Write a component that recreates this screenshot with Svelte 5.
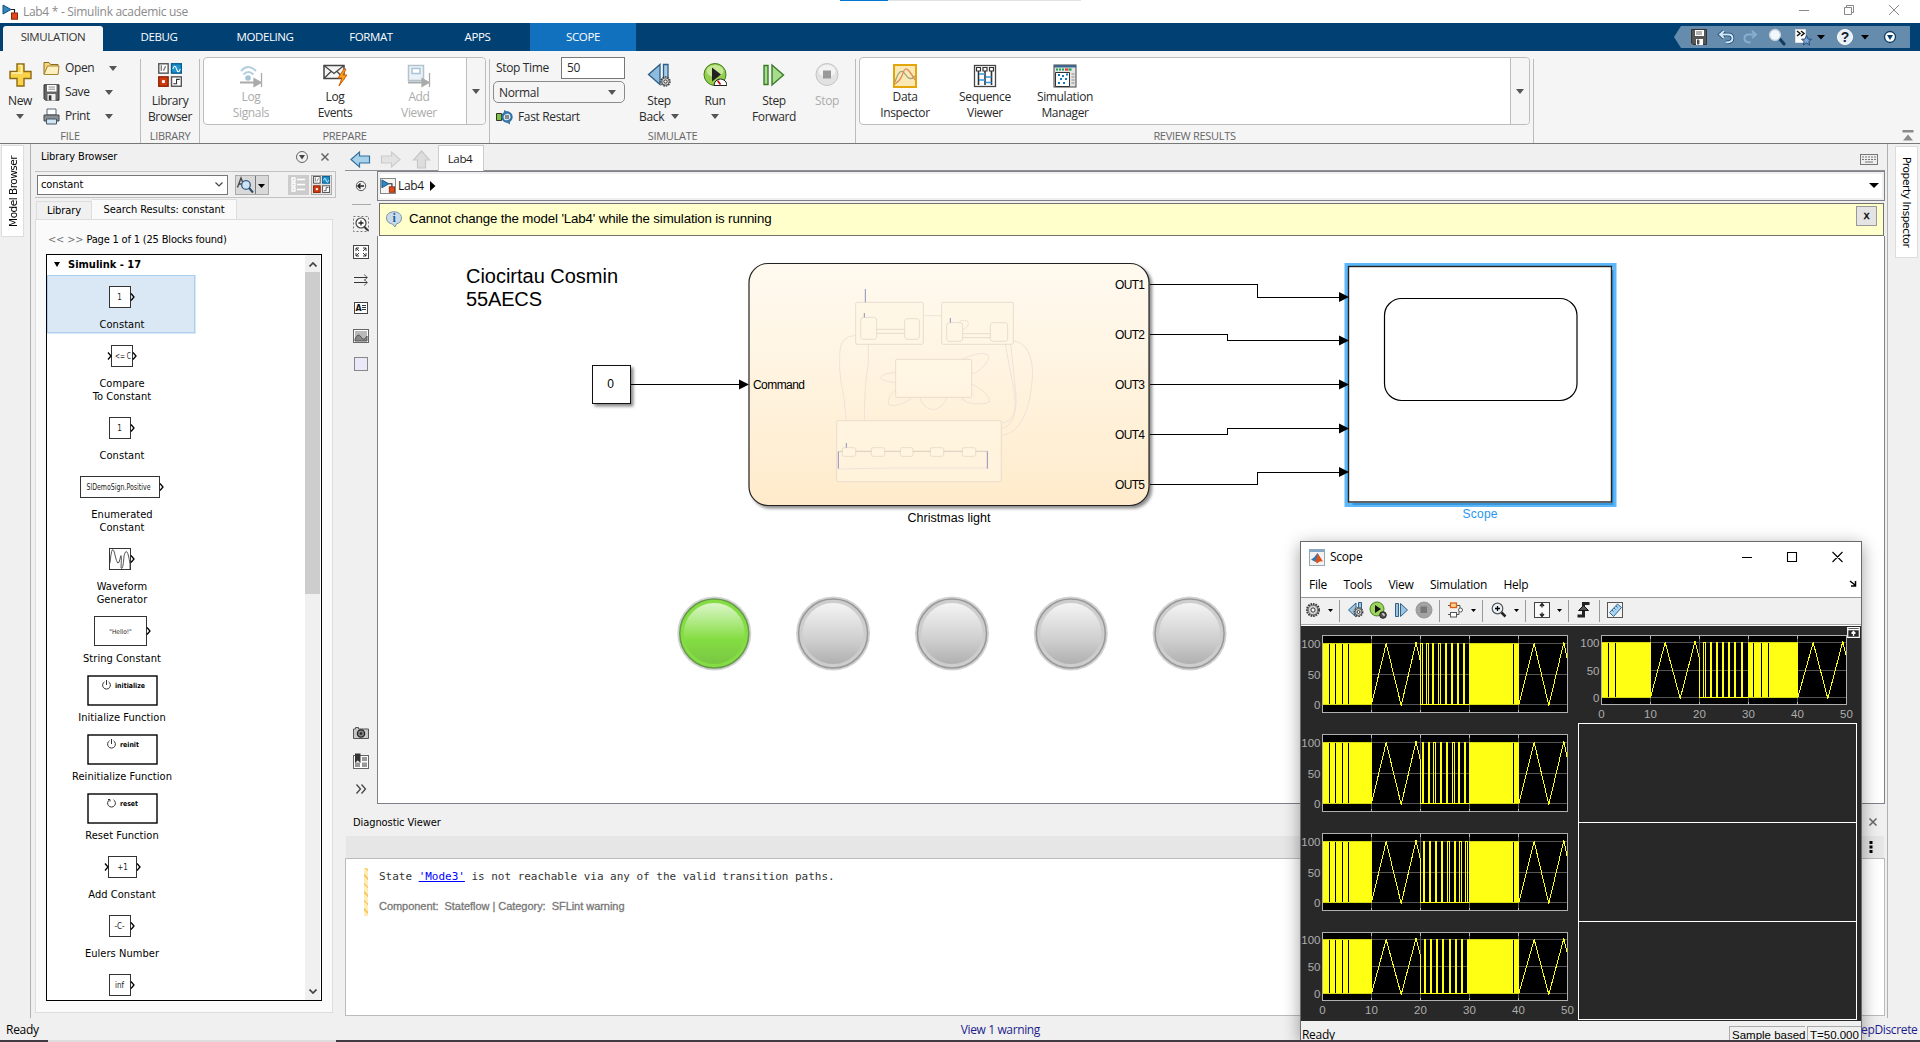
<script>
  const blocks = [
    { kind: 'box', text: '1', label: ['Constant'], selected: true },
    { kind: 'compare', text: '<= C', label: ['Compare', 'To Constant'] },
    { kind: 'box', text: '1', label: ['Constant'] },
    { kind: 'wide', text: 'SlDemoSign.Positive', label: ['Enumerated', 'Constant'] },
    { kind: 'wave', text: '', label: ['Waveform', 'Generator'] },
    { kind: 'string', text: '"Hello!"', label: ['String Constant'] },
    { kind: 'func', text: 'initialize', ix: 59, w: 30, label: ['Initialize Function'] },
    { kind: 'func', text: 'reinit', ix: 64, w: 19, label: ['Reinitialize Function'] },
    { kind: 'func', text: 'reset', ix: 64, w: 18, label: ['Reset Function'] },
    { kind: 'add', text: '+1', label: ['Add Constant'] },
    { kind: 'box', text: '-C-', label: ['Eulers Number'] },
    { kind: 'box', text: 'inf', label: [] }
  ];

  const outs = [
    { name: 'OUT1', y: 284.5, to: 297, bend: 1257.5 },
    { name: 'OUT2', y: 334.5, to: 340.5, bend: 1227.5 },
    { name: 'OUT3', y: 384.5, to: 384.5, bend: 1240.5 },
    { name: 'OUT4', y: 434.5, to: 428.5, bend: 1227.5 },
    { name: 'OUT5', y: 484.5, to: 472, bend: 1257.5 }
  ];

  const lamps = [714.3, 833.1, 952, 1070.8, 1189.6];

  // Signal shapes are given in pixels from the left edge of the axes.
  const early = [7, 13, 20, 26];
  const tall = { top: 9.5, bottom: 86.5, hi: 17.5, mid: 48.5, lo: 78.5 };
  const short = { top: 9.5, bottom: 77.5, hi: 16.5, mid: 43.5, lo: 70.5 };
  const plots = [
    { ...tall, x: 21.5, gaps: early, fill: 146.5, late: [191], solid: [110.5, 123.5, 129.5, 135.5, 141.5], open: [[98, 100], [104, 106], [116, 118]] },
    { ...tall, x: 21.5, gaps: early, fill: 146.5, late: [191], solid: [100.5, 106.5, 118.5, 124.5, 136.5, 142.5], open: [[111, 113], [130, 132]] },
    { ...tall, x: 21.5, gaps: early, fill: 146.5, late: [191], solid: [101.5, 107.5, 113.5, 119.5, 132.5], open: [[125, 127], [137, 139], [143, 145]] },
    { ...short, x: 21.5, gaps: early, fill: 144.5, late: [191], solid: [102.5, 108.5, 114.5, 120.5, 127.5, 133.5, 139.5], open: [], axis: 87 }
  ];
  const plot5 = { ...short, x: 23.5, lo: 71.5, mid: 44.5, bottom: 78.5, gaps: [7, 14], fill: 146.5, late: [152, 160, 167], solid: [109.5, 115.5, 121.5, 127.5, 133.5, 140.5], open: [[102, 104]], axis: 88 };
  const ticks = [0, 10, 20, 30, 40, 50];

  const trace = (p) => {
    const pts = [[49, p.lo], [63.7, p.hi], [78.7, p.lo + 1], [93.5, p.hi - 1], [98, p.hi + (p.lo - p.hi) * 0.3], [98, p.lo], [p.fill, p.lo]];
    return pts.map((q) => `${p.x + q[0]},${q[1]}`).join(' ');
  };
  const tail = (p) =>
    [[196.3, p.lo], [211.7, p.hi], [226.3, p.lo + 1], [241.3, p.hi - 1], [245, p.hi + (p.lo - p.hi) * 0.27], [245, p.lo]]
      .map((q) => `${p.x + q[0]},${q[1]}`).join(' ');
</script>

{#snippet caret()}
  <svg class="caret" width="8" height="5" viewBox="0 0 8 5"><path d="M0 0h8L4 5z" fill="#555" /></svg>
{/snippet}

{#snippet modelIcon()}
  <svg width="16" height="16" viewBox="0 0 16 16">
    <path d="M1 1l8 4.5-8 4.5z" fill="#2f87c0" stroke="#12507c" />
    <path d="M9 5.5h3.5V9" fill="none" stroke="#222" stroke-width="1.2" />
    <rect x="9.5" y="9" width="6" height="6.2" fill="#e0481a" stroke="#8c2508" />
  </svg>
{/snippet}

{#snippet grid4(s)}
  <svg width={s} height={s} viewBox="0 0 22 22">
    <rect x=".7" y=".7" width="8.6" height="8.6" fill="#fff" stroke="#555" stroke-width="1.3" />
    <path d="M3 2v5M5 7l2-4" stroke="#777" stroke-width="1.2" />
    <rect x="12.4" y=".7" width="9" height="8.6" fill="#1d94cf" stroke="#0a5f92" stroke-width="1.3" />
    <path d="M13.5 5.5q2-5 3.500 0t3.500 0" fill="none" stroke="#fff" />
    <rect x=".7" y="12.700" width="8.600" height="8.600" fill="#cf3a10" stroke="#8f2504" stroke-width="1.300" />
    <rect x="3.700" y="15.700" width="2.600" height="2.600" fill="#fff" />
    <rect x="12.400" y="12.700" width="9" height="8.600" fill="#fff" stroke="#555" stroke-width="1.300" />
    <path d="M14 19h3v-4h3" fill="none" stroke="#333" />
  </svg>
{/snippet}

{#snippet disk(c)}
  <svg width="17" height="17" viewBox="0 0 17 17">
    <path d="M1 .8h15v15.400H2.500L1 14.700z" fill={c} stroke="#333" />
    <rect x="4" y="1" width="9.500" height="6.500" fill="#fff" />
    <path d="M5.500 3h6.500M5.500 5.200h6.500" stroke="#888" />
    <rect x="4.500" y="10" width="8" height="6.500" fill="#eee" /><rect x="5.800" y="11.300" width="2.600" height="5" fill="#333" />
  </svg>
{/snippet}

{#snippet gear(x, y, r)}
  <circle cx={x} cy={y} {r} fill="#ddd" stroke="#3d3d3d" stroke-width={r * 0.35} stroke-dasharray="1.6 .9" />
  <circle cx={x} cy={y} r={r * 0.82} fill="#d4d4d4" stroke="#444" stroke-width=".8" />
  <circle cx={x} cy={y} r={r * 0.35} fill="#fff" stroke="#333" />
{/snippet}

{#snippet plot(p, w)}
  <svg width={w} height="99" viewBox="0 0 {w} 99" shape-rendering="crispEdges">
    <rect x={p.x} y={p.top} width="245" height={p.bottom - p.top} fill="#000" />
    {#each [p.hi, p.mid, p.lo] as y}<path d="M{p.x} {y}h245" stroke="#555" />{/each}
    {#each [49, 98, 147, 196] as x}
      <path d="M{p.x + x} {p.top}v{p.bottom - p.top}" stroke="#555" />
      <path d="M{p.x + x} {p.top}v3M{p.x + x} {p.bottom}v-3" stroke="#b5b5b5" />
    {/each}
    <g fill="#ffff14">
      <rect x={p.x} y={p.hi - 0.5} width="49" height={p.lo - p.hi + 1} />
      <rect x={p.x + p.fill} y={p.hi - 0.5} width={196 - p.fill} height={p.lo - p.hi + 1} />
      {#each p.solid as s}<rect x={p.x + s - 1} y={p.hi - 0.5} width="2" height={p.lo - p.hi + 1} />{/each}
    </g>
    {#each [...p.gaps, ...p.late] as g}<rect x={p.x + g - 0.5} y={p.hi + 0.5} width="1" height={p.lo - p.hi - 1} fill="#000" />{/each}
    {#each p.open as o}<path d="M{p.x + o[0]} {p.lo}V{p.hi}H{p.x + o[1]}V{p.lo}" fill="none" stroke="#ffff14" />{/each}
    <path d="M{p.x} {p.hi}h49M{p.x} {p.lo}h49M{p.x + p.fill} {p.hi}H{p.x + 196}M{p.x + p.fill} {p.lo}H{p.x + 196}" stroke="#d9d916" />
    <polyline points={trace(p)} fill="none" stroke="#ffff14" />
    <polyline points={tail(p)} fill="none" stroke="#ffff14" />
    <rect x={p.x} y={p.top} width="245" height={p.bottom - p.top} fill="none" stroke="#b0b0b0" />
    <g class="tick" text-anchor="end">
      <text x={p.x - 2} y={p.hi + 4}>100</text><text x={p.x - 2} y={p.mid + 4}>50</text><text x={p.x - 2} y={p.lo + 4}>0</text>
    </g>
    {#if p.axis}
      <g class="tick" text-anchor="middle">
        {#each ticks as t}<text x={p.x + t * 4.9} y={p.axis + 4}>{t}</text>{/each}
      </g>
    {/if}
  </svg>
{/snippet}

<div class="app">
  <header class="title">
    {@render modelIcon()}
    <span>Lab4 * - Simulink academic use</span>
    <i class="accent"></i>
    <svg class="wc" width="110" height="23" viewBox="0 0 110 23" fill="none" stroke="#888">
      <path d="M5 10.5h10M50.500 7.500h7v7h-7zM52.500 7.500v-2h7v7h-2M95 5l10 10M105 5l-10 10" />
    </svg>
  </header>

  <nav class="tabs">
    <div class="tab active">SIMULATION</div>
    <div class="tab t1">DEBUG</div>
    <div class="tab t2">MODELING</div>
    <div class="tab t3">FORMAT</div>
    <div class="tab t4">APPS</div>
    <div class="tab scope-tab">SCOPE</div>
    <div class="quick">
      <svg width="236" height="22" viewBox="1674 26 236 22">
        <path d="M1674 37l7-11h229v22h-229z" fill="#668cad" />
        <path d="M1691.500 29.500h15v15h-13.500l-1.500-1.500z" fill="#555" stroke="#333" />
        <path d="M1695 30h9v6h-9zM1696 39h7v6h-7z" fill="#fff" /><path d="M1697 40h2v4h-2M1696 32h6M1696 34h6" stroke="#666" fill="#444" />
        <path d="M1724 31l-4 3.500 4 3.500M1720.500 34.500h8q4 0 4 4t-7 4" fill="none" stroke="#16456f" stroke-width="3.600" />
        <path d="M1724 31l-4 3.500 4 3.500M1720.500 34.500h8q4 0 4 4t-7 4" fill="none" stroke="#cfe6f6" stroke-width="2" />
        <path d="M1752 31l4 3.500-4 3.500M1755.500 34.500h-7q-4 0-4 4t6 4" fill="none" stroke="#86afcd" stroke-width="2" />
        <path d="M1779 38l5 6" stroke="#153a5e" stroke-width="3" stroke-linecap="round" /><circle cx="1775" cy="35" r="5.500" fill="#f2f7fb" stroke="#c3cfda" stroke-width="1.300" />
        <path d="M1795.500 29.500h10v13h-10z" fill="#fff" stroke="#ddd" /><path d="M1797 31l3 2.500-3 2.500M1801 31l3 2.500-3 2.500" fill="none" stroke="#111" stroke-width="1.500" />
        <path d="M1806.500 35.500l1.500 3.500 3.500.3-2.700 2.200.9 3.500-3.200-2-3.200 2 .9-3.500-2.700-2.200 3.500-.3z" fill="#7da7d0" stroke="#214c7c" />
        <path d="M1817 35h8l-4 4.500zM1861 35h8l-4 4.500z" fill="#000" />
        <circle cx="1845" cy="37" r="7.500" fill="#e8f0f6" stroke="#fff" />
        <text x="1845" y="42" class="qm" text-anchor="middle">?</text>
        <circle cx="1890" cy="37" r="5.500" fill="#fff" stroke="#0a3d69" stroke-width="1.300" /><path d="M1887 35h6l-3 5z" fill="#073a66" />
      </svg>
    </div>
  </nav>

  <section class="ribbon">
    <div class="sec s-file">
      <div class="body">
        <div class="big new">
          <svg width="24" height="24" viewBox="0 0 24 24"><path d="M9 1h7v7.500h7v7h-7V23H9v-7.500H2v-7h7z" fill="#fbd34b" stroke="#8d6a12" stroke-width="1.400" /><path d="M10.500 2.500h3v7.500H3.500" fill="none" stroke="#fff2b8" stroke-width="1.500" /></svg>
          <div class="cap">New<br />{@render caret()}</div>
        </div>
        <div class="rows">
          <div class="row">
            <svg width="17" height="17" viewBox="0 0 17 17"><path d="M1 14V2.500h5l1.500 2H15V14z" fill="#f6d67c" stroke="#8a6b22" /><path d="M1 14.500L4.500 6H16l-1 8.500z" fill="#fdf0c0" stroke="#a8852f" /></svg>
            <span>Open</span>{@render caret()}</div>
          <div class="row">{@render disk('#666')}<span>Save</span>{@render caret()}</div>
          <div class="row">
            <svg width="17" height="17" viewBox="0 0 17 17"><path d="M4 1h9v6H4z" fill="#fff" stroke="#567" /><path d="M1 7h15v6H1z" fill="#8a8f95" stroke="#444" /><path d="M3.500 11h10v5h-10z" fill="#cfe6f5" stroke="#456" /></svg>
            <span>Print</span>{@render caret()}</div>
        </div>
      </div>
      <div class="name">FILE</div>
    </div>

    <div class="sec s-lib">
      <div class="body"><div class="big lib">{@render grid4(24)}<div class="cap">Library<br />Browser</div></div></div>
      <div class="name">LIBRARY</div>
    </div>

    <div class="sec s-prep">
      <div class="gallery">
        <div class="g-item off">
          <svg width="24" height="24" viewBox="0 0 24 24" fill="none"><path d="M2 7q7-8 15 0M4.500 10.500q5-5 10 0" stroke="#b4cede" stroke-width="2" /><circle cx="9" cy="14" r="2.800" fill="#a7c4d6" /><path d="M1 18.500h16" stroke="#aaa" stroke-width="2" /><path d="M15 14.500l7 4-7 4zM22.500 9v14" fill="#aaa" stroke="#aaa" stroke-width="1.300" /></svg>
          <div>Log<br />Signals</div></div>
        <div class="g-item">
          <svg width="24" height="24" viewBox="0 0 24 24"><path d="M1 1.500h20v13H1z" fill="#f5f5f5" stroke="#444" stroke-width="1.500" /><path d="M1 1.500l10 8 10-8M1 14.500L8 7.500M21 14.500L14 7.500" fill="none" stroke="#444" stroke-width="1.300" /><path d="M21 5l-6 9h4l-3 8 8-11h-4l3-6z" fill="#fba31c" stroke="#cf5b06" /></svg>
          <div>Log<br />Events</div></div>
        <div class="g-item off">
          <svg width="24" height="24" viewBox="0 0 24 24"><path d="M1.500 1.500h15v15h-15z" fill="#eaf2f8" stroke="#b4c2cc" stroke-width="1.500" /><path d="M5 4.500h8v5H5z" fill="#fff" stroke="#a8c4d8" stroke-width="1.500" /><path d="M1 18.500h16" stroke="#aaa" stroke-width="2" /><path d="M15 14.500l7 4-7 4zM22.500 9v14" fill="#aaa" stroke="#aaa" stroke-width="1.300" /></svg>
          <div>Add<br />Viewer</div></div>
        <div class="drop">{@render caret()}</div>
      </div>
      <div class="name">PREPARE</div>
    </div>

    <div class="sec s-sim">
      <div class="body">
        <div class="form">
          <div class="stop"><span>Stop Time</span><div class="input">50</div></div>
          <div class="combo"><span>Normal</span>{@render caret()}</div>
          <div class="fast">
            <svg width="17" height="15" viewBox="0 0 17 15"><path d="M.5 3.500h5v7h-5z" fill="#7cc43e" stroke="#333" /><circle cx="11" cy="7" r="4.600" fill="#d5e5f1" stroke="#2f6ea3" stroke-width="2.200" /><path d="M8 0l5 2.500-5 2.500zM14 9l-5 2.500 5 3z" fill="#3a78ab" /><path d="M9 6h4M9 8h4" stroke="#333" /></svg>
            <span>Fast Restart</span></div>
        </div>
        <div class="big b1">
          <svg width="24" height="24" viewBox="0 0 24 24"><path d="M13 1.500v20L1.500 11.500z" fill="#8fbbdc" stroke="#2a5d87" stroke-width="1.300" /><path d="M16.500 1.500h4.500v14h-4.500z" fill="#a9cde6" stroke="#2a5d87" stroke-width="1.300" />{@render gear(18.5, 18.5, 4.5)}</svg>
          <div class="cap">Step<br />Back <span class="in">{@render caret()}</span></div></div>
        <div class="big b2">
          <svg width="24" height="24" viewBox="0 0 24 24"><circle cx="12" cy="11.500" r="11" fill="#95cf4e" stroke="#3f7a1e" /><ellipse cx="12" cy="8" rx="8.500" ry="6" fill="#c6e896" /><path d="M9 4.500l9 7-9 7z" fill="#222" /><path d="M11 22.500a6.500 6.500 0 1 1 13 0z" fill="#fff" stroke="#222" /><path d="M17.500 21.500l-3-4" stroke="#c00" stroke-width="1.500" /></svg>
          <div class="cap">Run<br />{@render caret()}</div></div>
        <div class="big b3">
          <svg width="24" height="24" viewBox="0 0 24 24"><path d="M2 2.500h4v19H2z" fill="#a6dc8c" stroke="#3a7d27" stroke-width="1.400" /><path d="M10 2l11.500 10L10 22z" fill="#a6dc8c" stroke="#3a7d27" stroke-width="1.400" /></svg>
          <div class="cap">Step<br />Forward</div></div>
        <div class="big b4 off">
          <svg width="24" height="24" viewBox="0 0 24 24"><circle cx="12" cy="11.500" r="11" fill="#e2e2e2" stroke="#c4c4c4" /><ellipse cx="12" cy="8" rx="8.500" ry="6" fill="#f3f3f3" /><rect x="8" y="7.500" width="8" height="8" fill="#999" /></svg>
          <div class="cap">Stop</div></div>
      </div>
      <div class="name">SIMULATE</div>
    </div>

    <div class="sec s-rev">
      <div class="gallery">
        <div class="g-item">
          <svg width="24" height="24" viewBox="0 0 24 24"><rect x="1" y="1" width="22" height="22" fill="#fbe9b5" stroke="#e2a60c" stroke-width="2" /><path d="M2 18q5-16 10-8t10 2" fill="none" stroke="#9aa77b" stroke-width="1.300" /><path d="M2 20q6-4 8-11t6-2 6 9" fill="none" stroke="#e08a5a" stroke-width="1.300" /></svg>
          <div>Data<br />Inspector</div></div>
        <div class="g-item">
          <svg width="24" height="24" viewBox="0 0 24 24" fill="none"><rect x="1.500" y="1.500" width="21" height="21" fill="#fff" stroke="#444" stroke-width="1.300" /><path d="M5.500 7v14M12 7v14M18.500 7v14" stroke="#333" stroke-width="1.600" /><path d="M3.500 3.500h4v3.500h-4zM10 3.500h4v3.500h-4zM16.500 3.500h4v3.500h-4z" fill="#fff" stroke="#333" stroke-width="1.200" /><path d="M6 10h6M6 16h6M12.500 13h6M12.500 18.500h6" stroke="#2d9be8" stroke-width="1.500" /></svg>
          <div>Sequence<br />Viewer</div></div>
        <div class="g-item">
          <svg width="24" height="24" viewBox="0 0 24 24"><rect x="1" y="1" width="22" height="22" fill="#e4e4e4" stroke="#444" /><path d="M1 1h22v2.500H1z" fill="#3d6590" /><path d="M3 5.500h9" stroke="#12a54b" stroke-width="2.200" stroke-dasharray="2 1" /><path d="M12 5.500h3" stroke="#e8312a" stroke-width="2.200" /><path d="M15.500 5.500h3" stroke="#12a54b" stroke-width="2.200" /><path d="M2.500 8.500h14v14h-14z" fill="#fff" stroke="#333" /><path d="M5 11h2M9 12h2M13 10.500h2M7 15h2M12 15h2M5 19h2M10 19h2" stroke="#1778c2" stroke-width="2" /><path d="M18.500 10h3M18.500 13h3M18.500 16h3M18.500 19h3" stroke="#888" /></svg>
          <div>Simulation<br />Manager</div></div>
        <div class="drop">{@render caret()}</div>
      </div>
      <div class="name">REVIEW RESULTS</div>
    </div>
    <svg class="collapse" width="12" height="12" viewBox="0 0 12 12"><path d="M.5 0h11v2.500H.5zM6 4.500l5 6H1z" fill="#8b8b8b" /></svg>
  </section>

  <main>
    <aside class="rail left"><div class="vtab up"><span>Model Browser</span></div></aside>

    <section class="library">
      <div class="l-head"><span>Library Browser</span>
        <svg width="40" height="14" viewBox="295 149 40 14" fill="none"><circle cx="302" cy="156" r="5.500" stroke="#666" /><path d="M299 154h6l-3 4.500z" fill="#444" /><path d="M321.500 152.500l7 7M328.500 152.500l-7 7" stroke="#666" stroke-width="1.500" /></svg>
      </div>
      <div class="l-search">
        <div class="l-input"><span>constant</span><svg width="8" height="5" viewBox="0 0 8 5"><path d="M.5.500L4 4 7.500.500" fill="none" stroke="#444" stroke-width="1.200" /></svg></div>
        <div class="l-find">
          <svg width="32" height="18" viewBox="0 0 32 18"><path d="M1.500 11.500L5 2l3.500 9.500M3 8h4" fill="none" stroke="#444" stroke-width="1.300" /><circle cx="10" cy="9" r="4.300" fill="#cfe4f3" stroke="#35618b" stroke-width="1.300" /><path d="M13 12l4 4.500" stroke="#2b4a66" stroke-width="2" /><path d="M19.500 0v18" stroke="#777" /><path d="M22 8h7l-3.500 4z" fill="#000" /></svg>
        </div>
        <div class="l-btn list"><svg width="15" height="15" viewBox="0 0 15 15" fill="none" stroke="#fff" stroke-width="1.300"><path d="M1 1h3v3H1zM1 6h3v3H1zM1 11h3v3H1zM6 2.500h8M6 7.500h8M6 12.500h8" /></svg></div>
        <div class="l-btn">{@render grid4(17)}</div>
      </div>
      <div class="l-tabs"><div>Library</div><div class="on">Search Results: constant</div></div>
      <div class="l-body">
        <div class="pager"><span>&lt;&lt; &gt;&gt;</span> Page 1 of 1 (25 Blocks found)</div>
        <div class="list-box">
          <div class="scroller">
            <div class="group"><svg width="6" height="5" viewBox="0 0 6 5"><path d="M0 0h6L3 5z" fill="#000" /></svg><b>Simulink - 17</b></div>
            {#each blocks as b}
              <div class="block" class:selected={b.selected}>
                <svg width="148" height="43" viewBox="-1 0 148 43" fill="none" stroke="#333">
                  {#if b.kind === 'box' || b.kind === 'wave'}
                    <rect x="61.500" y="11.500" width="21" height="21" fill="#fff" /><path d="M83 18.500l3 3.500-3 3.500" stroke="#000" stroke-width="1.300" />
                    {#if b.kind === 'wave'}
                      <path d="M62 26q2-22 5-8t5 4 1 9q2 3 3-12 3-12 6 8v5" stroke="#444" stroke-width=".9" />
                    {:else}
                      <text x="71.500" y="25" class="glyph" text-anchor="middle">{b.text}</text>
                    {/if}
                  {:else if b.kind === 'compare'}
                    <rect x="63.500" y="11.500" width="21" height="21" fill="#fff" /><path d="M60 18.500l3 3.500-3 3.500M85 18.500l3 3.500-3 3.500" stroke="#000" stroke-width="1.300" />
                    <text x="67" y="25" class="glyph" textLength="16" lengthAdjust="spacingAndGlyphs">{b.text}</text>
                  {:else if b.kind === 'add'}
                    <rect x="60.500" y="11.500" width="28" height="21" fill="#fff" /><path d="M57 18.500l3 3.500-3 3.500M89 18.500l3 3.500-3 3.500" stroke="#000" stroke-width="1.300" />
                    <text x="74.500" y="25" class="glyph" text-anchor="middle">{b.text}</text>
                  {:else if b.kind === 'wide'}
                    <rect x="32.500" y="11.500" width="79" height="21" fill="#fff" /><path d="M112 18.500l3 3.500-3 3.500" stroke="#000" stroke-width="1.300" />
                    <text x="70.500" y="25" class="glyph" text-anchor="middle" textLength="64" lengthAdjust="spacingAndGlyphs">{b.text}</text>
                  {:else if b.kind === 'string'}
                    <rect x="46.500" y="7.500" width="52" height="29" fill="#fff" /><path d="M99 18.500l3 3.500-3 3.500" stroke="#000" stroke-width="1.300" />
                    <text x="72.500" y="24.500" class="glyph tiny" text-anchor="middle">{b.text}</text>
                  {:else}
                    <rect x="40" y="8" width="69" height="29" stroke="#000" stroke-width="1.400" fill="#fff" />
                    <path d="M{b.ix - 2.5} 13.800a3.900 3.900 0 1 0 4 0" /><path d={b.text === 'reset' ? `M${b.ix - 4} 13.5h2v2` : `M${b.ix - 0.5} 12v5`} />
                    <text x={b.ix + 8} y="19.500" class="glyph bold" textLength={b.w} lengthAdjust="spacingAndGlyphs">{b.text}</text>
                  {/if}
                </svg>
                {#each b.label as line}<div class="lbl">{line}</div>{/each}
              </div>
            {/each}
          </div>
          <div class="vbar">
            <svg width="8" height="5" viewBox="0 0 8 5"><path d="M.5 4.500L4 1l3.500 3.500" fill="none" stroke="#444" stroke-width="1.700" /></svg>
            <i></i>
            <svg width="8" height="5" viewBox="0 0 8 5"><path d="M.5.500L4 4 7.500.500" fill="none" stroke="#444" stroke-width="1.700" /></svg>
          </div>
        </div>
      </div>
    </section>

    <section class="center">
      <div class="docbar">
        <svg width="90" height="26" viewBox="345 145 90 26">
          <path d="M351 159.500l8.500-7.500v4h10v7h-10v4z" fill="#a8d1ec" stroke="#33719e" stroke-width="1.200" />
          <path d="M400 159.500l-8.500-7.500v4h-10v7h10v4z" fill="#e3e3e3" stroke="#ccc" stroke-width="1.200" />
          <path d="M421.500 151l8 9h-4v8h-8v-8h-4z" fill="#ddd" stroke="#c8c8c8" stroke-width="1.200" />
        </svg>
        <div class="doctab">Lab4</div>
        <svg class="kbd" width="18" height="11" viewBox="0 0 18 11"><rect x=".5" y=".5" width="17" height="10" fill="#eee" stroke="#777" /><path d="M2 3h14M2 5.500h14" stroke="#777" stroke-dasharray="2 1" /><path d="M5 8h8" stroke="#777" /></svg>
      </div>

      <div class="editor">
        <div class="tools">
          <svg width="20" height="28" viewBox="0 0 20 28" fill="none"><circle cx="10" cy="14" r="4.700" stroke="#555" /><path d="M7 14h6M9.500 11.500L7 14l2.500 2.500" stroke="#222" stroke-width="1.500" /></svg>
          <hr />
          <svg width="20" height="28" viewBox="0 0 20 28" fill="none"><rect x="2.500" y="6.500" width="15" height="15" stroke="#777" stroke-dasharray="2 2" /><circle cx="10" cy="13" r="5" fill="#fff" stroke="#444" stroke-width="1.200" /><path d="M7.500 13h5M10 10.500v5" stroke="#222" stroke-width="1.300" /><path d="M13.500 17l3.500 3.500" stroke="#333" stroke-width="2" /></svg>
          <svg width="20" height="28" viewBox="0 0 20 28" fill="none"><rect x="2.500" y="7.500" width="15" height="13" fill="#fff" stroke="#444" /><path d="M5 13v-3h3M5 10l3 3M15 13v-3h-3M15 10l-3 3M5 15v3h3M5 18l3-3M15 15v3h-3M15 18l-3-3" stroke="#222" stroke-width=".9" /></svg>
          <svg width="20" height="28" viewBox="0 0 20 28" fill="none" stroke="#333"><path d="M3 11.500h13M3 16.500h13" /><path d="M13 8.500l3.500 3-3.500 3M13 13.500l3.500 3-3.500 3" stroke="#666" /></svg>
          <svg width="20" height="28" viewBox="0 0 20 28" fill="none"><rect x="3.500" y="8.500" width="13" height="11" fill="#fff" stroke="#444" /><text x="4.500" y="17" class="aic">A</text><path d="M11 11.500h4M11 13.500h4M11 15.500h4" stroke="#333" /></svg>
          <svg width="20" height="28" viewBox="0 0 20 28" fill="none"><rect x="2.500" y="7.500" width="15" height="13" fill="#fff" stroke="#666" /><path d="M4 9h12v10H4z" fill="#b9b9b9" /><path d="M4 17q3-7 6-2t6-1v5H4z" fill="#888" stroke="#555" /></svg>
          <svg width="20" height="28" viewBox="0 0 20 28"><rect x="3.500" y="7.500" width="13" height="13" fill="#ebe8fa" stroke="#888" /></svg>
          <span class="grow"></span>
          <svg width="20" height="28" viewBox="0 0 20 28"><path d="M2.500 10h2V8.500h3V10h10v9.500h-15z" fill="#c9c9c9" stroke="#555" /><circle cx="10" cy="14.500" r="3.600" fill="#888" stroke="#222" stroke-width="1.300" /><circle cx="10" cy="14.500" r="1.300" fill="#222" /></svg>
          <svg width="20" height="28" viewBox="0 0 20 28"><rect x="2.500" y="8.500" width="15" height="13" fill="#fff" stroke="#666" /><path d="M11 10h5v4h-5zM11 15.500h5v4.500h-5zM4 15.500h5v4.500H4z" fill="#999" /><path d="M4 6.500h5.500V16l-2.700-2.500L4 16z" fill="#333" /></svg>
          <svg width="20" height="28" viewBox="0 0 20 28" fill="none" stroke="#444" stroke-width="1.300"><path d="M5.500 9.500l4 4.500-4 4.500M10.500 9.500l4 4.500-4 4.500" /></svg>
        </div>
        <div class="work">
          <div class="address">
            <div class="adr-in">
              <div class="mbox">{@render modelIcon()}</div><span>Lab4</span>
              <svg width="6" height="10" viewBox="0 0 6 10"><path d="M0 0l5.500 5L0 10z" /></svg>
              <svg class="adr-drop" width="10" height="5" viewBox="0 0 10 5"><path d="M0 0h10L5 5z" /></svg>
            </div>
          </div>
          <div class="notice">
            <svg width="18" height="17" viewBox="0 0 18 17"><path d="M9 .8c4.500 0 7.500 2.600 7.500 6s-2 5.500-5 6L10 16l-2.500-3C4 12.500 1.500 10.300 1.500 6.800S4.500.8 9 .8z" fill="#c9dbe9" stroke="#7a8fa3" /><text x="9" y="11" class="info" text-anchor="middle">i</text></svg>
            <span>Cannot change the model 'Lab4' while the simulation is running</span>
            <button>x</button>
          </div>
          <div class="canvas">
            <svg width="1506" height="567" viewBox="378 236 1506 567">
              <defs>
                <linearGradient id="chart" x2="0" y2="1"><stop offset="0" stop-color="#fff9ef" /><stop offset=".3" stop-color="#fff6e6" /><stop offset="1" stop-color="#ffebcb" /></linearGradient>
                <linearGradient id="off" x2="0" y2="1"><stop offset="0" stop-color="#f4f4f4" /><stop offset=".6" stop-color="#cfcfcf" /><stop offset="1" stop-color="#b0b0b0" /></linearGradient>
                <linearGradient id="on" x2="0" y2="1"><stop offset="0" stop-color="#dcf6c9" /><stop offset=".6" stop-color="#84dd42" /><stop offset="1" stop-color="#79c644" /></linearGradient>
                <filter id="sh" x="-10%" y="-10%" width="125%" height="125%" color-interpolation-filters="sRGB"><feDropShadow dx="2.500" dy="2.500" stdDeviation="1.500" flood-opacity=".45" /></filter>
              </defs>
              <g class="note"><text x="466" y="283" textLength="152">Ciocirtau Cosmin</text><text x="466" y="306" textLength="76">55AECS</text></g>

              <rect x="592.500" y="365.500" width="38" height="38" fill="#fff" stroke="#111" filter="url(#sh)" />
              <text x="610.500" y="388" class="ct" text-anchor="middle">0</text>
              <path d="M631 384.500h110" stroke="#000" /><path d="M739 379.500l10 5-10 5z" />

              <rect x="749" y="263.500" width="400" height="242" rx="19" fill="url(#chart)" stroke="#222" stroke-width="1.200" filter="url(#sh)" />
              <g class="mini" transform="translate(730 240) scale(.33333)">
                <rect x="377" y="187" width="203" height="126" rx="5" /><rect x="635" y="187" width="215" height="126" rx="5" />
                <rect x="392" y="232" width="48" height="66" rx="8" /><rect x="524" y="236" width="44" height="62" rx="8" />
                <rect x="650" y="248" width="48" height="56" rx="8" /><rect x="781" y="248" width="52" height="56" rx="8" />
                <path d="M440 268h84M440 280h84M698 281h83M698 293h83" />
                <rect x="497" y="358" width="228" height="114" rx="3" /><rect x="320" y="542" width="494" height="183" rx="5" />
                <rect x="337" y="623" width="40" height="26" rx="6" /><rect x="424" y="623" width="40" height="26" rx="6" /><rect x="511" y="623" width="38" height="26" rx="6" /><rect x="601" y="623" width="40" height="26" rx="6" /><rect x="697" y="623" width="40" height="26" rx="6" />
                <g class="soft"><path d="M581 227h54M698 270q22-10 16-26-20-8-28 4M377 286q-50 2-48 60v40q2 40 12 80l8 76M415 313v60q-12 60-12 168M694 358q60-26 80-14 10 12-24 46-14 12-25 10M725 432q50 24 54 52-16 14-66 4l-20-14M497 398q-40 2-46 14 4 12 46 16M497 450q-24 16-22 44 30 10 70-20M570 474q12 34 40 35 28-4 40-35M826 313l28 150q10 80-38 86M842 313l16 150q4 90-42 102M850 303q56 6 58 100-10 170-92 184" /><path d="M327 687l166-3h280" /><path class="dk" d="M377 634h47M464 634h47M549 634h52M641 634h56M737 634h36M327 634h10" /></g>
                <path class="blue" d="M406 147v40M403 219v13M661 234v14M349 609v14M325 634v52M772 634v52" />
              </g>
              <text x="753" y="389" class="ct" textLength="52">Command</text>
              <text x="949" y="522" class="cl" text-anchor="middle" textLength="83">Christmas light</text>
              {#each outs as o}
                <text x="1145" y={o.y + 4.5} class="ct" text-anchor="end" textLength="30">{o.name}</text>
              {/each}

              <rect x="1346.500" y="265" width="268" height="240" fill="none" stroke="#5cb8fa" stroke-width="4" />
              <path d="M1612.500 270v234h-260" fill="none" stroke="#3a97dc" stroke-width="2" />
              <rect x="1348.500" y="266.500" width="263" height="235.500" fill="#fff" stroke="#222" stroke-width="1.400" />
              <rect x="1384.500" y="298.500" width="192.500" height="102" rx="17" fill="#fff" stroke="#000" stroke-width="1.200" />
              <g shape-rendering="crispEdges">
                {#each outs as o}<path d="M1150 {o.y}H{o.bend}V{o.to}H1341" fill="none" stroke="#000" />{/each}
              </g>
              {#each outs as o}<path d="M1339 {o.to - 5}l10 5-10 5z" />{/each}
              <text x="1480" y="518" class="ct scope-lbl" text-anchor="middle" textLength="35">Scope</text>

              {#each lamps as x, i}
                <circle cx={x} cy="633.500" r="37" fill="#d2d2d2" />
                <circle cx={x} cy="633.500" r="34.500" fill={i ? '#cdcdcd' : '#84dd42'} stroke={i ? '#999' : '#689a4c'} stroke-width="1.500" />
                <circle cx={x} cy="633.500" r="30.500" fill="url(#{i ? 'off' : 'on'})" />
              {/each}
            </svg>
          </div>
        </div>
      </div>

      <div class="d-head"><span>Diagnostic Viewer</span><svg width="10" height="10" viewBox="0 0 10 10"><path d="M1.500 1.500l7 7M8.500 1.500l-7 7" stroke="#666" stroke-width="1.500" /></svg></div>
      <div class="d-bar"><svg width="4" height="14" viewBox="0 0 4 14"><path d="M.5 1h3v3h-3zM.5 5.500h3v3h-3zM.5 10h3v3h-3z" /></svg></div>
      <div class="d-body">
        <div class="zebra"></div>
        <div class="msg">
          <div class="mono">State <u>'Mode3'</u> is not reachable via any of the valid transition paths.</div>
          <div class="meta">Component:&nbsp; Stateflow | Category:&nbsp; SFLint warning</div>
        </div>
      </div>
    </section>

    <aside class="rail right"><div class="vtab"><span>Property Inspector</span></div></aside>
  </main>

  <footer class="status"><span>Ready</span><span class="warn">View 1 warning</span><span class="solver">epDiscrete</span></footer>
  <div class="desk"><i></i></div>

  <section class="win">
    <div class="w-title">
      <svg width="17" height="17" viewBox="0 0 17 17"><rect x=".5" y=".5" width="15" height="16" fill="#f2f2f2" stroke="#9aa" /><path d="M.5.500h15V3H.5z" fill="#7fa8cb" /><path d="M2 10.500l3-2 3.500-4.500 2.500 5L6.500 13z" fill="#2b77b5" /><path d="M8.500 4q2 3 5.500 8.500-3-1-6 2L6 11.500q2-2 2.500-7.500z" fill="#d9531e" /></svg>
      <span>Scope</span>
      <svg class="w-ctl" width="112" height="20" viewBox="1736 546 112 20" fill="none" stroke="#000"><path d="M1742 556.500h10M1787.500 551.500h9v9h-9zM1832.500 551l10 10M1842.500 551l-10 10" stroke-width="1.100" /></svg>
    </div>
    <div class="w-menu"><span>File</span><span>Tools</span><span>View</span><span>Simulation</span><span>Help</span>
      <svg width="8" height="7" viewBox="0 0 8 7"><path d="M1 1l5 4M6.500 1v5H2" fill="none" stroke="#000" stroke-width="1.500" /></svg></div>
    <div class="w-tools">
      <svg width="560" height="27" viewBox="1301 598 560 27" fill="none">
        <path d="M1339.500 600v22M1439.500 600v22M1482.500 600v22M1525.500 600v22M1568.500 600v22M1599.500 600v22" stroke="#999" />
        <path d="M1328 609h5l-2.500 3zM1471 609h5l-2.500 3zM1514 609h5l-2.500 3zM1557 609h5l-2.500 3z" fill="#000" />
        {@render gear(1313, 610, 6)}
        <path d="M1356 603v14l-7.500-7zM1358.500 602.500h3v9h-3z" fill="#9cc4e0" stroke="#2f6087" />{@render gear(1358.5, 612, 4.2)}
        <circle cx="1377" cy="609" r="7" fill="#9ed45b" stroke="#477f22" /><path d="M1375 605l6 4-6 4z" fill="#111" /><circle cx="1383" cy="615" r="3.300" fill="#555" stroke="#222" /><path d="M1383 613v2h2" stroke="#fff" />
        <path d="M1395.500 603.500h3v13h-3zM1400.500 603.500l7 6.500-7 6.500z" fill="#9cc4e0" stroke="#2f6087" />
        <circle cx="1424" cy="610" r="8" fill="#a3a3a3" stroke="#999" /><rect x="1420.500" y="606.500" width="6.500" height="6.500" fill="#777" />
        <path d="M1448 605.500h3M1456 605.500h4v3M1448 614.500h3M1456 614.500h3v-3" stroke="#555" /><rect x="1450.500" y="603" width="6" height="4.500" fill="#ffd48c" stroke="#d9601a" stroke-width="1.300" /><rect x="1450.500" y="612.500" width="6" height="4.500" fill="#fff" stroke="#555" /><circle cx="1460.500" cy="610" r="2" fill="#fff" stroke="#555" />
        <circle cx="1497.500" cy="608.500" r="5.300" fill="#e9f2f8" stroke="#555" stroke-width="1.200" /><path d="M1495 608.500h5M1497.500 606v5" stroke="#000" stroke-width="1.300" /><path d="M1501.500 612.500l4 4" stroke="#222" stroke-width="2.500" />
        <rect x="1534.500" y="602.500" width="15" height="15" fill="#fafafa" stroke="#444" /><path d="M1542 603.500v4M1542 612.500v4M1540 606l2-2.500 2 2.500M1540 614l2 2.500 2-2.500" stroke="#222" stroke-width="1.300" />
        <path d="M1577.500 616h6v-12.500h6" stroke="#222" stroke-width="3" /><path d="M1578.500 610.500l5-5 5 5z" fill="#555" stroke="#111" />
        <rect x="1607.500" y="602.500" width="15" height="15" fill="#f4f4f4" stroke="#555" /><path d="M1609.500 612.500l8-8.500 4 3.500-8 9z" fill="#a9d3ee" stroke="#2e6993" /><path d="M1612 610l1.500 1.500M1614 608l1.500 1.500M1616 606l1.500 1.500" stroke="#2e6993" />
      </svg>
    </div>
    <div class="w-plots">
      <div class="col-l">{#each plots as p}{@render plot(p, 277)}{/each}</div>
      <div class="col-r">
        {@render plot(plot5, 283)}
        <div class="empty"></div><div class="empty"></div><div class="empty"></div>
      </div>
      <svg class="dock" width="13" height="11" viewBox="0 0 13 11"><path d="M.7.700h11.600v9.600H.7zM.7 2.700h11.600" fill="none" stroke="#fff" stroke-width="1.200" /><path d="M6.500 9V5M4.500 6.500l2-2 2 2" fill="none" stroke="#fff" stroke-width="1.300" /></svg>
    </div>
    <div class="w-status"><span class="rdy">Ready</span><span class="cell c1">Sample based</span><span class="cell c2">T=50.000</span></div>
  </section>
</div>

<style>
  :global(body) { margin: 0; overflow: hidden; }
  * { box-sizing: border-box; }
  svg { display: block; flex: none; }
  .app { position: relative; width: 1920px; height: 1042px; overflow: hidden; background: #f0f0f0; display: flex; flex-direction: column; font-family: "Open Sans", "Noto Sans", sans-serif; font-size: 12px; letter-spacing: -0.35px; color: #1a1a1a; white-space: nowrap; }

  .title { height: 23px; flex: none; background: #fff; display: flex; align-items: center; padding-left: 2px; color: #8a8a8a; position: relative; }
  .title span { margin-left: 5px; letter-spacing: -0.3px; }
  .accent { position: absolute; left: 840px; top: 0; width: 241px; height: 1px; background: linear-gradient(90deg, #0078d7 48px, #e2e2e2 48px); }
  .wc { margin-left: auto; margin-right: 16px; }

  .tabs { height: 28px; flex: none; background: #004073; display: flex; align-items: stretch; color: #fff; font-size: 11.5px; letter-spacing: -0.4px; }
  .tab { display: flex; align-items: center; justify-content: center; flex: none; padding-bottom: 1px; }
  .active { margin: 3px 0 0 3px; width: 100px; background: #f5f5f5; color: #333; border-radius: 3px 3px 0 0; padding-bottom: 4px; }
  .t1 { width: 112px; } .t2 { width: 100px; } .t3 { width: 112px; } .t4 { width: 103px; padding-right: 2px; } .scope-tab { width: 106px; background: #1171be; }
  .quick { margin-left: auto; padding: 3px 10px 0 0; }
  .qm { font: bold 14px "Liberation Sans", sans-serif; fill: #123; letter-spacing: 0; }

  .ribbon { height: 93px; flex: none; background: #f5f5f5; border-bottom: 1px solid #777; display: flex; padding-top: 8px; color: #2a2a2a; }
  .sec { border-right: 1px solid #bcbcbc; display: flex; flex-direction: column; }
  .s-file { width: 141px; } .s-lib { width: 59px; } .s-prep { width: 290px; } .s-sim { width: 366px; } .s-rev { width: 678px; }
  .body { display: flex; height: 70px; }
  .name { height: 14px; line-height: 14px; text-align: center; color: #666; font-size: 11px; letter-spacing: -0.3px; }
  .big { padding-top: 4px; display: flex; flex-direction: column; align-items: center; text-align: center; }
  .cap { margin-top: 6px; line-height: 16px; }
  .cap .caret { margin: 5px auto 0; }
  .in { display: inline-block; margin-left: 4px; }
  .in .caret { margin: 0 0 2px; }
  .new { width: 40px; } .lib { width: 58px; }
  .rows { margin: -3px 0 0 3px; }
  .row { height: 24px; display: flex; align-items: center; }
  .row span { margin: -2px 15px 0 5px; }
  .gallery { height: 68px; margin: -2px 3px 4px; background: #fff; border: 1px solid #bdbdbd; border-radius: 4px; display: flex; padding-left: 5px; }
  .g-item { width: 84px; padding-top: 6px; display: flex; flex-direction: column; align-items: center; text-align: center; line-height: 16px; }
  .g-item div { margin-top: 1px; }
  .s-rev .g-item { width: 80px; }
  .off { color: #ababab; }
  .drop { margin-left: auto; width: 19px; border-left: 1px solid #bdbdbd; background: #f5f5f5; display: flex; align-items: center; justify-content: center; border-radius: 0 4px 4px 0; }
  .form { width: 135px; padding-left: 3px; margin-top: -3px; }
  .stop { display: flex; align-items: center; justify-content: space-between; padding-left: 3px; height: 23px; }
  .input { width: 64px; height: 22px; border: 1px solid #777; background: #fff; padding-left: 5px; line-height: 20px; }
  .combo { height: 22px; margin-top: 2px; border: 1px solid #8a8a8a; border-radius: 5px; display: flex; align-items: center; justify-content: space-between; padding: 0 8px 0 5px; }
  .fast { display: flex; align-items: center; height: 24px; padding: 2px 0 0 3px; margin-top: 1px; }
  .fast span { margin: -2px 0 0 5px; }
  .b1 { width: 68px; } .b2 { width: 44px; } .b3 { width: 74px; } .b4 { width: 32px; }
  .collapse { margin: 71px 6px 0 auto; }

  main { flex: 1; display: flex; min-height: 0; }
  .rail { flex: none; }
  .left { width: 31px; border-right: 1px solid #b0b0b0; padding: 1px 0 0 1px; }
  .right { width: 33px; border-left: 1px solid #b0b0b0; padding: 2px 0 0 7px; }
  .vtab { background: #fff; border: 1px solid #ddd; writing-mode: vertical-rl; width: 23px; height: 92px; display: flex; align-items: center; justify-content: center; font: 10.5px "DejaVu Sans", sans-serif; letter-spacing: -0.5px; color: #000; }
  .right .vtab { height: 112px; letter-spacing: -0.35px; }
  .up span { transform: rotate(180deg); }

  .library { width: 314px; flex: none; font-family: "DejaVu Sans Condensed", "DejaVu Sans", sans-serif; font-size: 11px; letter-spacing: -0.1px; color: #000; padding-left: 4px; }
  .l-head { height: 25px; display: flex; align-items: center; justify-content: space-between; padding: 0 10px 0 6px; }
  .l-search { height: 27px; margin-top: 2px; width: 301px; border: 1px solid #c2c2c2; border-width: 1px 1px 1px 0; display: flex; align-items: center; padding-left: 2px; }
  .l-input { width: 191px; height: 20px; border: 1px solid #777; background: #fff; display: flex; align-items: center; justify-content: space-between; padding: 0 4px 0 3px; margin-right: 7px; }
  .l-find { width: 34px; height: 20px; background: #d9d9d9; border: 1px solid #aaa; margin-right: 19px; flex: none; }
  .l-btn { width: 21px; height: 20px; margin-right: 2px; background: #e3e3e3; border: 1px solid #aaa; display: flex; align-items: center; justify-content: center; flex: none; }
  .list { background: #ccc; border-color: #ccc; }
  .l-tabs { height: 21px; display: flex; align-items: flex-end; padding-left: 1px; }
  .l-tabs div { height: 18px; width: 56px; border: 1px solid #ddd; border-bottom: 0; display: flex; align-items: center; justify-content: center; }
  .l-tabs .on { height: 20px; width: 145px; background: #fafafa; border-left: 0; letter-spacing: -0.05px; }
  .l-body { width: 298px; height: 794px; border: 1px solid #ddd; background: #fafafa; padding: 11px 0 0 10px; }
  .pager { height: 17px; line-height: 17px; padding-left: 2px; margin-bottom: 6px; letter-spacing: -0.18px; }
  .pager span { color: #777; }
  .list-box { width: 276px; height: 747px; border: 1px solid #000; background: #fff; display: flex; justify-content: space-between; padding-right: 1px; }
  .scroller { height: 745px; overflow: hidden; }
  .group { height: 20px; display: flex; align-items: center; padding: 0 0 1px 7px; }
  .group b { margin-left: 8px; letter-spacing: 0; }
  .block { width: 149px; padding-bottom: 2px; border: 1px solid transparent; border-width: 0 1px 1px 0; }
  .selected { background: #dae8f5; box-shadow: inset 0 0 0 1px #aed0ef; }
  .lbl { line-height: 13px; text-align: center; padding-left: 2px; letter-spacing: 0.05px; }
  .glyph { font: 8px "DejaVu Sans Condensed", sans-serif; fill: #222; stroke: none; letter-spacing: 0; }
  .tiny { font-size: 6.5px; }
  .bold { font-weight: bold; font-size: 7px; fill: #000; }
  .vbar { width: 15px; background: #f0f0f0; display: flex; flex-direction: column; align-items: center; padding: 7px 0 6px; }
  .vbar i { width: 15px; height: 322px; background: #cdcdcd; margin: 5px 0 auto; }

  .center { flex: 1; min-width: 0; display: flex; flex-direction: column; }
  .docbar { height: 27px; flex: none; width: 1540px; border-bottom: 1px solid #8f8f96; display: flex; padding-top: 1px; }
  .docbar > svg:first-child { margin-right: 3px; }
  .doctab { width: 46px; height: 26px; margin-bottom: -1px; background: #fff; border: 1px solid #ccc; border-bottom: 0; display: flex; align-items: center; justify-content: center; font: 11.5px "Open Sans", sans-serif; padding: 0 2px 1px 0; }
  .kbd { margin: 9px 7px 0 auto; }
  .editor { display: flex; height: 633px; flex: none; }
  .tools { width: 32px; display: flex; flex-direction: column; align-items: center; padding-top: 1px; height: 632px; }
  .tools hr { width: 19px; height: 1px; border: 0; background: #aaa; margin: 4px 0 5px; flex: none; }
  .grow { flex: 1; }
  .aic { font: bold 8px "DejaVu Sans", sans-serif; fill: #111; }
  .work { width: 1508px; display: flex; flex-direction: column; }
  .address { height: 30px; border: 1px solid #80808a; padding: 2px; flex: none; }
  .adr-in { background: #fff; height: 24px; display: flex; align-items: center; }
  .mbox { width: 16px; height: 16px; border: 1px solid #888; background: #f4f4f4; overflow: hidden; display: flex; margin-right: 2px; flex: none; }
  .mbox svg { width: 14px; height: 14px; }
  .adr-in span { margin: -1px 6px 0 0; font-size: 12px; }
  .adr-drop { margin: -2px 3px 0 auto; }
  .notice { margin: 2px 1px 0 2px; height: 33px; flex: none; background: #ffc; border: 1px solid #72726a; display: flex; align-items: center; padding: 0 6px 0 5px; font: 13.3px "Liberation Sans", Arial, sans-serif; letter-spacing: -0.15px; color: #000; }
  .notice span { margin: -2px auto 0 6px; }
  .notice button { width: 21px; height: 20px; padding: 0 0 2px; margin-bottom: 8px; border: 1px solid #999; background: #e4e4e4; font: 10.5px "DejaVu Sans", sans-serif; -webkit-text-stroke: 0.3px #000; }
  .info { font: bold 12px "Liberation Serif", serif; fill: #1d5f9a; }
  .canvas { flex: 1; background: #fff; border: 1px solid #80808a; border-top: 0; overflow: hidden; }
  .canvas text { font-family: "Liberation Sans", Arial, sans-serif; letter-spacing: 0; }
  .note text { font-size: 20px; }
  .ct { font-size: 12px; }
  .cl { font-size: 12.5px; }
  .canvas .scope-lbl { fill: #1e96f0; }
  .mini rect { fill: #fff6e4; fill-opacity: .6; stroke: #e4d9c8; stroke-width: 2.5; }
  .mini path { fill: none; stroke: #e2d8ca; stroke-width: 2.5; }
  .mini .soft path { stroke: #eadfd6; }
  .mini .soft .dk { stroke: #bdb6ab; stroke-width: 1.8; }
  .mini .blue { stroke: #8f92bd; stroke-width: 3; }

  .d-head { height: 32px; flex: none; width: 1540px; display: flex; align-items: center; justify-content: space-between; padding: 5px 7px 0 8px; font: 11px "DejaVu Sans Condensed", sans-serif; letter-spacing: -0.08px; color: #000; }
  .d-head svg { margin-top: -2px; }
  .d-bar { height: 22px; flex: none; width: 1538px; margin-left: 1px; background: #e6e6e6; display: flex; align-items: center; justify-content: flex-end; padding-right: 11px; }
  .d-body { height: 158px; flex: none; width: 1540px; background: #fff; border: 1px solid #bbb; padding: 9px 0 0 18px; display: flex; }
  .zebra { width: 4px; height: 48px; background: repeating-linear-gradient(45deg, #ffedb8 0 4px, #f9c96e 4px 6px); margin-right: 11px; }
  .mono { font: 11px/16px "DejaVu Sans Mono", monospace; letter-spacing: -0.02px; color: #333; padding-top: 1px; }
  .mono u { color: #00f; }
  .meta { font: 11px/16px "Liberation Sans", sans-serif; margin-top: 13px; letter-spacing: -0.04px; color: #777; -webkit-text-stroke: 0.3px #777; }

  .status { height: 22px; flex: none; display: flex; align-items: center; padding: 0 6px; letter-spacing: -0.28px; color: #000; }
  .status .warn { margin-left: 922px; color: #1c1c8c; letter-spacing: -0.38px; }
  .status .solver { margin-left: auto; color: #1c1c8c; letter-spacing: -0.35px; width: 53px; }
  .desk { height: 2px; flex: none; background: #403a45; padding-left: 48px; position: relative; z-index: 3; }
  .desk i { display: block; height: 2px; width: 288px; background: #ddd; }

  .win { position: absolute; left: 1300px; top: 541px; width: 562px; height: 499px; border: 1px solid #6a6a6a; border-bottom: 0; background: #fff; box-shadow: 0 4px 16px rgba(0, 0, 0, .38); z-index: 2; display: flex; flex-direction: column; color: #000; }
  .status .solver { position: relative; z-index: 3; }
  .w-title { height: 30px; display: flex; align-items: center; padding-left: 8px; flex: none; }
  .w-title span { margin: -2px 0 0 4px; letter-spacing: -0.25px; }
  .w-ctl { margin-left: auto; margin-right: 13px; }
  .w-menu { height: 25px; display: flex; align-items: center; padding: 0 4px 0 8px; letter-spacing: -0.27px; flex: none; }
  .w-menu span { margin-right: 16.5px; }
  .w-menu svg { margin: 0 0 2px auto; }
  .w-tools { height: 28px; border-top: 1px solid #999; background: #f0f0f0; border-bottom: 1px solid #aaa; margin-bottom: 1px; flex: none; overflow: hidden; }
  .w-plots { height: 395px; background: #282828; display: flex; position: relative; flex: none; }
  .col-l { width: 277px; }
  .tick text { font: 11.5px "Liberation Sans", sans-serif; fill: #adadad; letter-spacing: 0; }
  .empty { width: 279px; height: 99px; border: 1px solid #fff; border-top: 0; }
  .col-r .empty:nth-child(2) { height: 100px; border-top: 1px solid #fff; margin-top: -2px; }
  .col-r .empty:last-child { height: 98px; }
  .dock { position: absolute; right: 1px; top: 1px; }
  .w-status { flex: 1; display: flex; align-items: flex-end; background: #f0f0f0; font: 11.5px/14px "Liberation Sans", sans-serif; padding-left: 1px; letter-spacing: 0; }
  .rdy { font: 12px/14px "Open Sans", sans-serif; letter-spacing: -0.3px; margin-bottom: -2px; }
  .cell { border: 1px solid #aaa; border-width: 1px 0 0 1px; height: 14px; padding-left: 2px; line-height: 17px; }
  .c1 { margin-left: auto; width: 76px; margin-right: 2px; } .c2 { width: 54px; }
</style>
